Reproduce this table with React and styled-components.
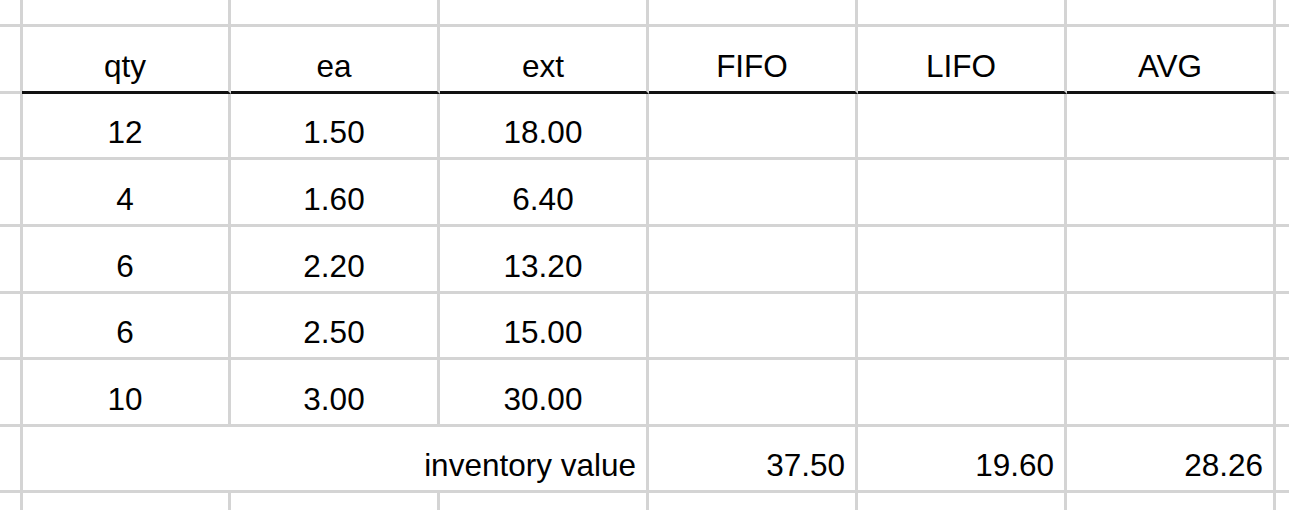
import React from "react";
import styled, { createGlobalStyle } from "styled-components";

const GlobalStyle = createGlobalStyle`
  html, body {
    margin: 0;
    padding: 0;
    background: #ffffff;
    overflow: hidden;
  }
`;

const headers = ["qty", "ea", "ext", "FIFO", "LIFO", "AVG"];

const rows = [
  ["12", "1.50", "18.00"],
  ["4", "1.60", "6.40"],
  ["6", "2.20", "13.20"],
  ["6", "2.50", "15.00"],
  ["10", "3.00", "30.00"],
];

const totals = ["37.50", "19.60", "28.26"];

const App = () => {
  return (
    <>
      <GlobalStyle />
      <Sheet>
        {/* partial row above the table */}
        {Array.from({ length: 8 }).map((_, i) => (
          <Cell key={"top" + i} $last={i === 7} />
        ))}

        {/* header */}
        <Cell />
        {headers.map((h) => (
          <Cell key={h} $header>
            {h}
          </Cell>
        ))}
        <Cell $last />

        {/* data rows */}
        {rows.map((r, ri) => (
          <React.Fragment key={"r" + ri}>
            <Cell />
            {r.map((v, ci) => (
              <Cell key={ci}>{v}</Cell>
            ))}
            <Cell />
            <Cell />
            <Cell />
            <Cell $last />
          </React.Fragment>
        ))}

        {/* totals */}
        <Cell />
        <Cell $span={3} $align="flex-end">
          inventory value
        </Cell>
        {totals.map((t) => (
          <Cell key={t} $align="flex-end">
            {t}
          </Cell>
        ))}
        <Cell $last />

        {/* partial row below */}
        {Array.from({ length: 8 }).map((_, i) => (
          <Cell key={"bot" + i} $last={i === 7} $bottom />
        ))}
      </Sheet>
    </>
  );
};

export default App;

const Sheet = styled.div`
  display: grid;
  grid-template-columns: 22px repeat(6, 209px) 1fr;
  grid-template-rows: 27px 67px 66px 67px 67px 66px 67px 66px 1fr;
  width: 1289px;
  height: 510px;
  font-family: "Liberation Sans", Arial, sans-serif;
  font-size: 31.5px;
  color: #000;
`;

const Cell = styled.div`
  box-sizing: border-box;
  display: flex;
  align-items: flex-end;
  justify-content: ${(p) => p.$align || "center"};
  grid-column: ${(p) => (p.$span ? `span ${p.$span}` : "auto")};
  padding: 0 10px 6px 10px;
  border-right: ${(p) => (p.$last ? "none" : "3px solid #d4d4d4")};
  border-bottom: ${(p) =>
    p.$bottom ? "none" : `3px solid ${p.$header ? "#111" : "#d4d4d4"}`};
  white-space: nowrap;
  overflow: hidden;
  line-height: normal;
`;
